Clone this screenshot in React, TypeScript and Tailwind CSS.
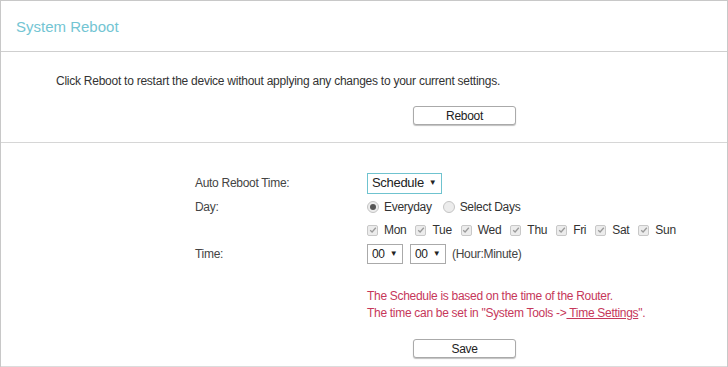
import React from "react";

const font = { fontFamily: '"Liberation Sans", Arial, sans-serif' };

function Check({ label }: { label: string }) {
  return (
    <div className="flex items-center">
      <span className="w-[11px] h-[11px] rounded-[2px] border border-[#c8c8c8] bg-[#ececec] flex items-center justify-center">
        <svg width="8" height="8" viewBox="0 0 8 8">
          <path d="M1.2 4.2 L3.1 6 L6.8 1.8" fill="none" stroke="#9a9a9a" strokeWidth="1.3" />
        </svg>
      </span>
      <span className="ml-[6px] text-[12px] text-[#333]">{label}</span>
    </div>
  );
}

function Radio({ on, label }: { on: boolean; label: string }) {
  return (
    <div className="flex items-center">
      <span className="w-[12px] h-[12px] rounded-full border border-[#c4c4c4] bg-[#ececec] flex items-center justify-center">
        {on && <span className="w-[6px] h-[6px] rounded-full bg-[#555]" />}
      </span>
      <span className="ml-[5px] text-[12px] text-[#333]">{label}</span>
    </div>
  );
}

function Btn({ label }: { label: string }) {
  return (
    <div className="w-[103px] h-[19px] rounded-[3px] border border-[#aaa] bg-white shadow-[0_1px_1px_rgba(0,0,0,0.25)] flex items-center justify-center text-[12px] text-[#222]">
      {label}
    </div>
  );
}

export default function App() {
  return (
    <div style={font} className="w-[728px] h-[367px] bg-white border-t border-l border-r border-[#c8c8c8] flex flex-col tracking-[-0.3px]">
      <div className="h-[51px] border-b border-[#cfcfcf] flex items-center pl-[15px] pt-[3px]">
        <span className="text-[15px] text-[#73c5d3] tracking-normal">System Reboot</span>
      </div>
      <div className="h-[91px] border-b border-[#d6d6d6] flex flex-col">
        <div className="pl-[55px] pt-[22px] text-[12px] text-[#333] leading-[14px] tracking-[-0.25px]">
          Click Reboot to restart the device without applying any changes to your current settings.
        </div>
        <div className="pl-[412px] mt-[18px]">
          <Btn label="Reboot" />
        </div>
      </div>
      <div className="flex-1 border-b border-[#dcdcdc] flex flex-col pt-[29px] text-[12px] text-[#333]">
        <div className="flex items-center h-[22px]">
          <div className="w-[194px]" />
          <div className="w-[172px] text-[#444]">Auto Reboot Time:</div>
          <div className="h-[21px] w-[75px] border border-[#6fc3cf] flex items-center pl-[4px] text-[13px] text-[#222]">
            Schedule<span className="ml-[5px] text-[8px]">▼</span>
          </div>
        </div>
        <div className="flex items-center h-[24px] mt-[1px]">
          <div className="w-[194px]" />
          <div className="w-[172px] text-[#444]">Day:</div>
          <div className="flex items-center">
            <Radio on label="Everyday" />
            <div className="ml-[11px]">
              <Radio on={false} label="Select Days" />
            </div>
          </div>
        </div>
        <div className="flex items-center h-[22px]">
          <div className="w-[366px]" />
          <div className="flex items-center gap-[9px]">
            <Check label="Mon" />
            <Check label="Tue" />
            <Check label="Wed" />
            <Check label="Thu" />
            <Check label="Fri" />
            <Check label="Sat" />
            <Check label="Sun" />
          </div>
        </div>
        <div className="flex items-center h-[24px] mt-[1px]">
          <div className="w-[194px]" />
          <div className="w-[172px] text-[#444]">Time:</div>
          <div className="h-[20px] w-[36px] border border-[#aaa] flex items-center pl-[4px] text-[12px] text-[#222]">
            00<span className="ml-[5px] text-[8px]">▼</span>
          </div>
          <div className="ml-[7px] h-[20px] w-[36px] border border-[#aaa] flex items-center pl-[4px] text-[12px] text-[#222]">
            00<span className="ml-[5px] text-[8px]">▼</span>
          </div>
          <span className="ml-[6px] text-[#444]">(Hour:Minute)</span>
        </div>
        <div className="pl-[366px] mt-[22px] text-[#c6375a] leading-[17px]">
          <div>The Schedule is based on the time of the Router.</div>
          <div>
            The time can be set in "System Tools -&gt;<span className="underline"> Time Settings</span>".
          </div>
        </div>
        <div className="pl-[412px] mt-[17px]">
          <Btn label="Save" />
        </div>
      </div>
    </div>
  );
}
